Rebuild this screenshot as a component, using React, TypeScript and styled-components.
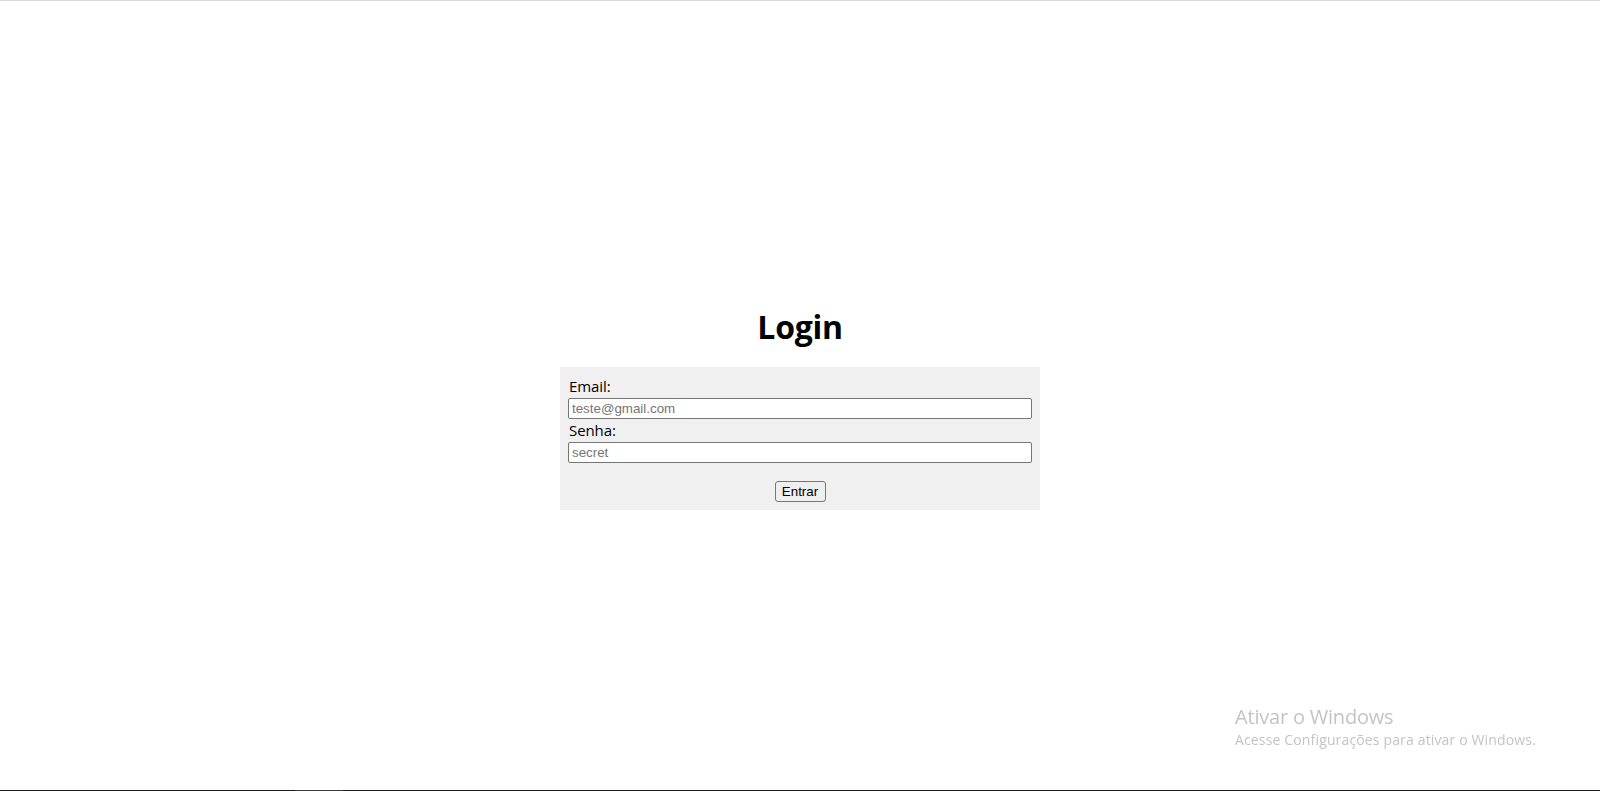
import React from "react";
import styled, { createGlobalStyle } from "styled-components";

const GlobalStyle = createGlobalStyle`
  html, body {
    margin: 0;
    padding: 0;
    background: #ffffff;
  }
  body {
    font-family: "Open Sans", "Noto Sans", sans-serif;
    color: #000000;
  }
  * { box-sizing: border-box; }
`;

const Page = styled.div`
  height: 100vh;
  display: flex;
  flex-direction: column;
  border-top: 1px solid #dadada;
`;

const Main = styled.main`
  flex: 1;
  display: flex;
  flex-direction: column;
  align-items: center;
  justify-content: center;
`;

const Title = styled.h1`
  margin: 24px 0 19px;
  font-size: 32px;
  line-height: 43px;
  font-weight: 700;
  letter-spacing: -0.3px;
`;

const Form = styled.form`
  width: 480px;
  padding: 8px;
  background: #f0f0f0;
  display: flex;
  flex-direction: column;
`;

const Label = styled.label`
  display: block;
  font-size: 15px;
  line-height: 23px;
  height: 23px;
  padding-left: 1px;
  letter-spacing: -0.1px;
`;

const Input = styled.input`
  display: block;
  width: 100%;
  height: 21px;
  margin: 0;
  padding: 1px 3px;
  border: 1px solid #767676;
  border-radius: 2px;
  background: #ffffff;
  font-family: "Liberation Sans", Arial, sans-serif;
  font-size: 13.33px;
  color: #000;
  &::placeholder {
    color: #757575;
  }
`;

const Actions = styled.div`
  display: flex;
  justify-content: center;
  margin-top: 18px;
`;

const Button = styled.button`
  height: 21px;
  width: 51px;
  padding: 1px 6px;
  border: 1px solid #767676;
  border-radius: 3px;
  background: #efefef;
  font-family: "Liberation Sans", Arial, sans-serif;
  font-size: 13.33px;
  color: #000;
  line-height: 15px;
`;

const Taskbar = styled.div`
  height: 1px;
  display: flex;
  background: #1c1c1c;
`;

const TaskbarSpacer = styled.div<{ $w?: number }>`
  width: ${(p) => (p.$w ? `${p.$w}px` : "auto")};
  flex: ${(p) => (p.$w ? "none" : "1")};
`;

const TaskbarItem = styled.div`
  width: 48px;
  background: #3a3a3a;
`;

const Watermark = styled.div`
  position: fixed;
  left: 1235px;
  top: 703px;
  color: #c4c4c4;
  pointer-events: none;
`;

const WatermarkTitle = styled.div`
  font-size: 20px;
  line-height: 27px;
  letter-spacing: -0.2px;
`;

const WatermarkText = styled.div`
  font-size: 14px;
  line-height: 20px;
  letter-spacing: 0.15px;
`;

export default function App() {
  return (
    <>
      <GlobalStyle />
      <Page>
        <Main>
          <Title>Login</Title>
          <Form onSubmit={(e) => e.preventDefault()}>
            <Label htmlFor="email">Email:</Label>
            <Input id="email" type="email" placeholder="teste@gmail.com" />
            <Label htmlFor="senha">Senha:</Label>
            <Input id="senha" type="password" placeholder="secret" />
            <Actions>
              <Button type="submit">Entrar</Button>
            </Actions>
          </Form>
        </Main>
        <Taskbar>
          <TaskbarSpacer $w={295} />
          <TaskbarItem />
          <TaskbarSpacer />
        </Taskbar>
      </Page>
      <Watermark>
        <WatermarkTitle>Ativar o Windows</WatermarkTitle>
        <WatermarkText>Acesse Configurações para ativar o Windows.</WatermarkText>
      </Watermark>
    </>
  );
}
